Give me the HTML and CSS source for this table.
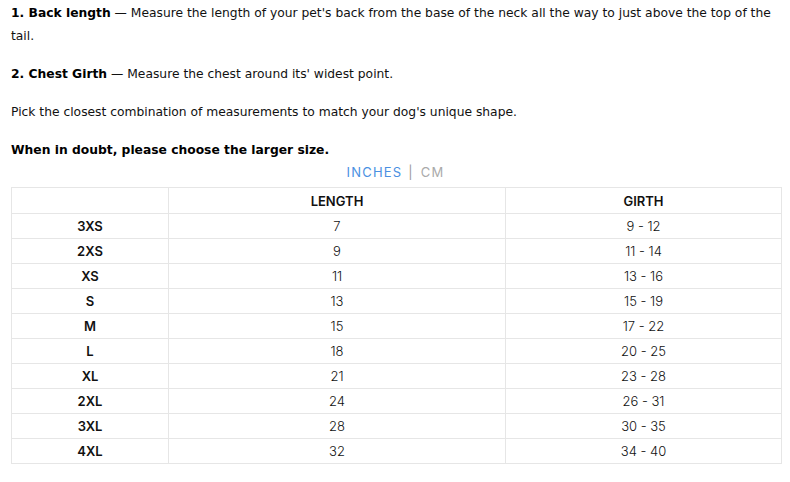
FILE: index.html
```html
<!DOCTYPE html>
<html>
<head>
<meta charset="utf-8">
<link rel="stylesheet" href="styles.css">
</head>
<body>
<div class="page">
  <p class="text"><strong>1. Back length</strong> — Measure the length of your pet's back from the base of the neck all the way to just above the top of the tail.</p>
  <p class="text"><strong>2. Chest Girth</strong> — Measure the chest around its' widest point.</p>
  <p class="text">Pick the closest combination of measurements to match your dog's unique shape.</p>
  <p class="text last"><strong>When in doubt, please choose the larger size.</strong></p>
  <div class="units"><span class="active">INCHES</span><span class="sep">|</span><span class="inactive">CM</span></div>
  <table class="sizes">
    <colgroup><col class="c1"><col class="c2"><col class="c3"></colgroup>
    <thead>
      <tr><th></th><th>LENGTH</th><th>GIRTH</th></tr>
    </thead>
    <tbody>
      <tr><td class="size">3XS</td><td>7</td><td>9 - 12</td></tr>
      <tr><td class="size">2XS</td><td>9</td><td>11 - 14</td></tr>
      <tr><td class="size">XS</td><td>11</td><td>13 - 16</td></tr>
      <tr><td class="size">S</td><td>13</td><td>15 - 19</td></tr>
      <tr><td class="size">M</td><td>15</td><td>17 - 22</td></tr>
      <tr><td class="size">L</td><td>18</td><td>20 - 25</td></tr>
      <tr><td class="size">XL</td><td>21</td><td>23 - 28</td></tr>
      <tr><td class="size">2XL</td><td>24</td><td>26 - 31</td></tr>
      <tr><td class="size">3XL</td><td>28</td><td>30 - 35</td></tr>
      <tr><td class="size">4XL</td><td>32</td><td>34 - 40</td></tr>
    </tbody>
  </table>
</div>
</body>
</html>
```
FILE: styles.css
```css
html, body {
  margin: 0;
  padding: 0;
  background: #fff;
}
.page {
  padding: 2px 10px 0 11px;
}
.text {
  margin: 0 0 15px 0;
  font-family: "DejaVu Sans", Verdana, sans-serif;
  font-size: 12.3px;
  line-height: 23px;
  color: #111;
}
.text strong {
  font-weight: bold;
  color: #000;
}
.text.last {
  margin-bottom: 0;
}
.units {
  text-align: center;
  font-family: Inter, "Open Sans", sans-serif;
  font-size: 13px;
  letter-spacing: 1.2px;
  line-height: 20px;
  margin-bottom: 5px;
}
.units .active { color: #4a90e2; }
.units .sep { color: #999; margin: 0 7px 0 6px; }
.units .inactive { color: #aaa; }
.sizes {
  width: 770px;
  border-collapse: collapse;
  table-layout: fixed;
  font-family: Inter, "Open Sans", sans-serif;
  font-size: 13px;
  color: #111;
}
.c1 { width: 157px; }
.c2 { width: 337px; }
.c3 { width: 276px; }
.sizes th, .sizes td {
  border: 1px solid #e6e6e6;
  text-align: center;
  padding: 0;
}
.sizes th {
  height: 25px;
  font-weight: 600;
}
.sizes td {
  height: 24px;
  font-weight: 300;
}
.sizes td.size {
  font-weight: 600;
}
```
